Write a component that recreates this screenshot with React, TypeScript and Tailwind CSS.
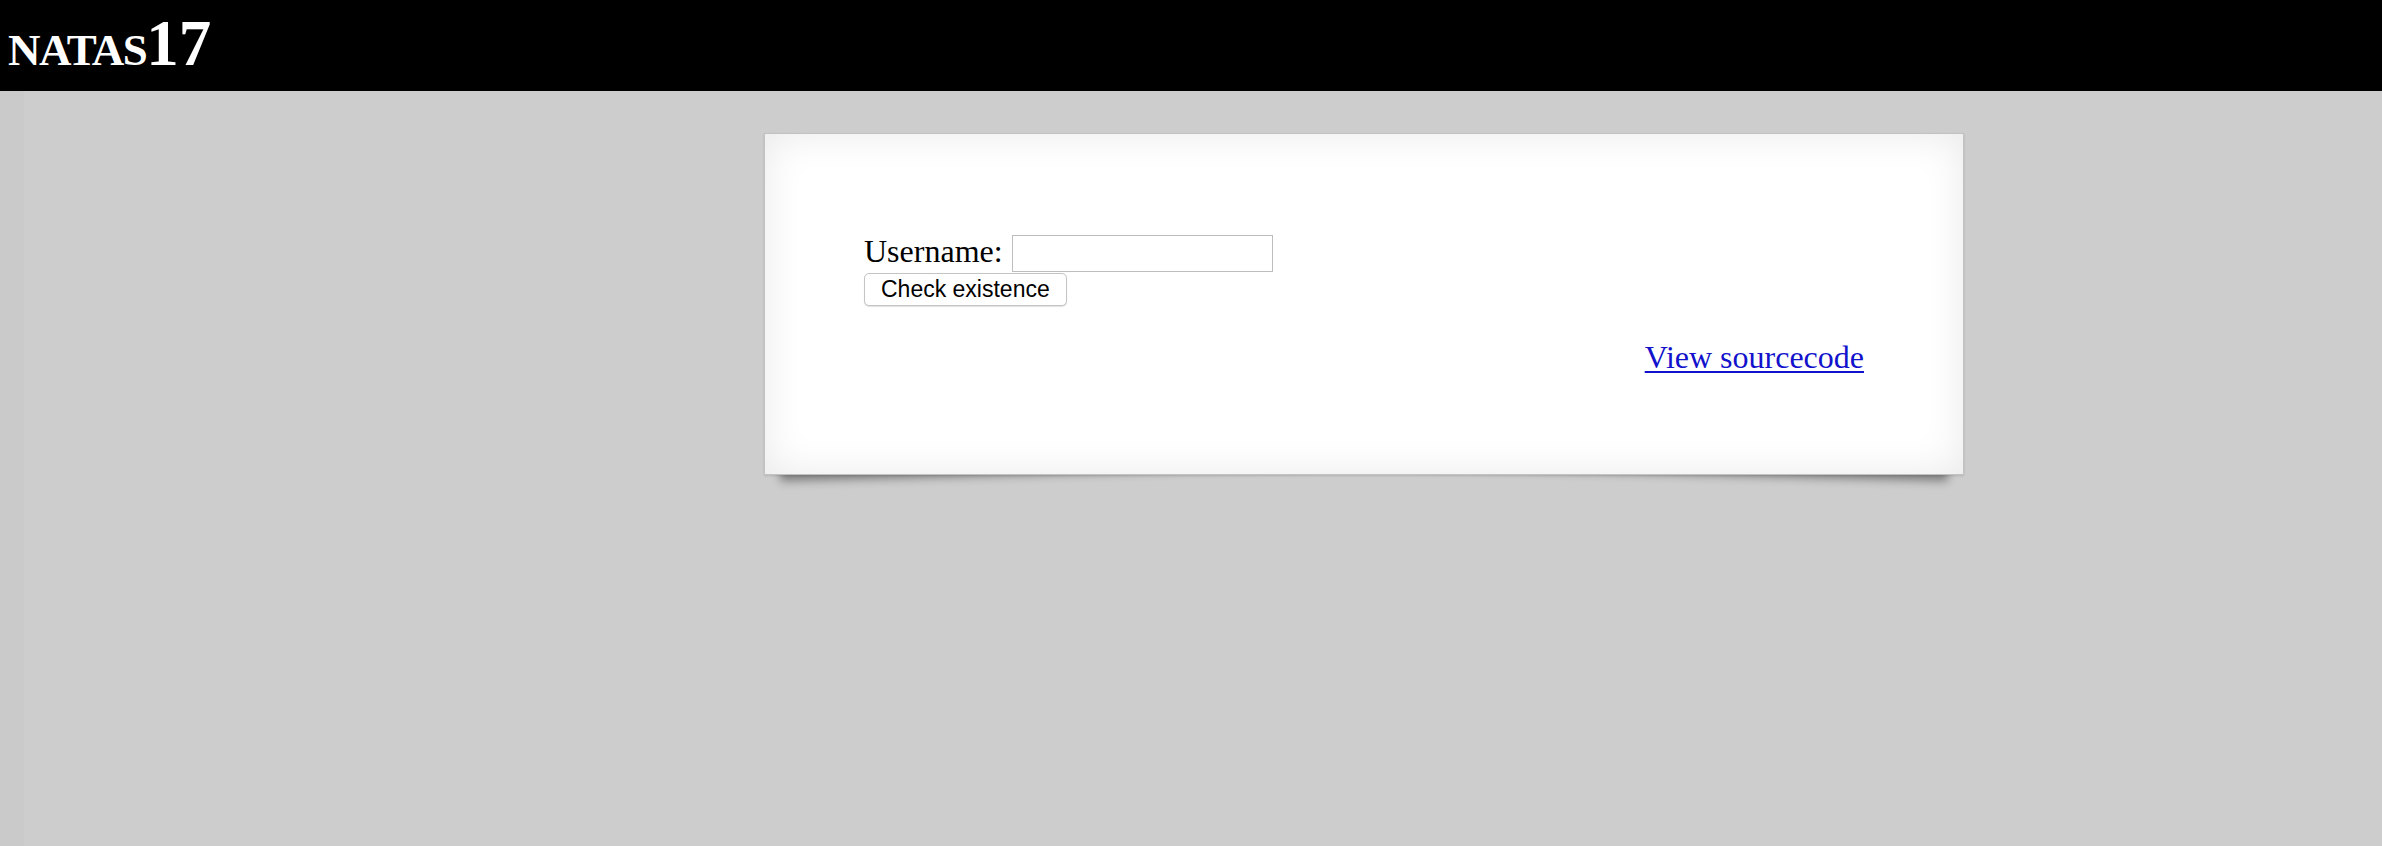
export default function App() {
  return (
    <div className="w-full h-[846px] bg-[#cdcdcd] flex flex-col overflow-hidden">
      <header className="h-[91px] bg-black flex items-start pl-[8px] shrink-0" style={{ fontFamily: '"Liberation Serif", "Times New Roman", serif' }}>
        <h1 className="flex items-baseline text-white font-bold leading-none mt-[11px]">
          <span className="text-[45px] tracking-[-1.5px]">NATAS</span>
          <span className="text-[65px]">17</span>
        </h1>
      </header>
      <div className="flex flex-1">
        <div className="w-[24px] bg-[#cacaca] shrink-0" />
        <main className="pl-[740px] pt-[42px] isolate">
          <div
            className="relative w-[1200px] h-[342px] bg-white border border-[#c2c2c2] pt-[99px] pl-[99px] pr-[99px] shadow-[inset_0_0_40px_rgba(0,0,0,0.09),0_1px_2px_rgba(0,0,0,0.12)]"
            style={{ fontFamily: '"Liberation Serif", "Times New Roman", serif' }}
          >
            <div className="absolute -z-10 left-[14px] bottom-[12px] w-[45%] h-[20%] rotate-[-1.5deg] shadow-[0_12px_10px_rgba(0,0,0,0.4)]" />
            <div className="absolute -z-10 right-[14px] bottom-[12px] w-[45%] h-[20%] rotate-[1.5deg] shadow-[0_12px_10px_rgba(0,0,0,0.4)]" />
            <form className="flex flex-col items-start">
              <div className="flex items-start h-[39px]">
                <label className="text-[32px] leading-[37px] text-black">Username:</label>
                <input
                  type="text"
                  className="ml-[9px] mt-[2px] w-[261px] h-[37px] border border-[#bdbdbd] bg-white outline-none"
                />
              </div>
              <button
                type="button"
                className="mt-[1px] h-[33px] px-[16px] rounded-[5px] border border-[#c4c4c4] bg-white text-black text-[23px] leading-none shadow-[0_1px_1px_rgba(0,0,0,0.12)]"
                style={{ fontFamily: '"Liberation Sans", Arial, sans-serif' }}
              >
                Check existence
              </button>
            </form>
            <div className="mt-[33px] text-right">
              <a href="#" className="text-[32px] leading-[37px] text-[#1212cc] underline decoration-[2px] underline-offset-[3px]">
                View sourcecode
              </a>
            </div>
          </div>
        </main>
      </div>
    </div>
  );
}
